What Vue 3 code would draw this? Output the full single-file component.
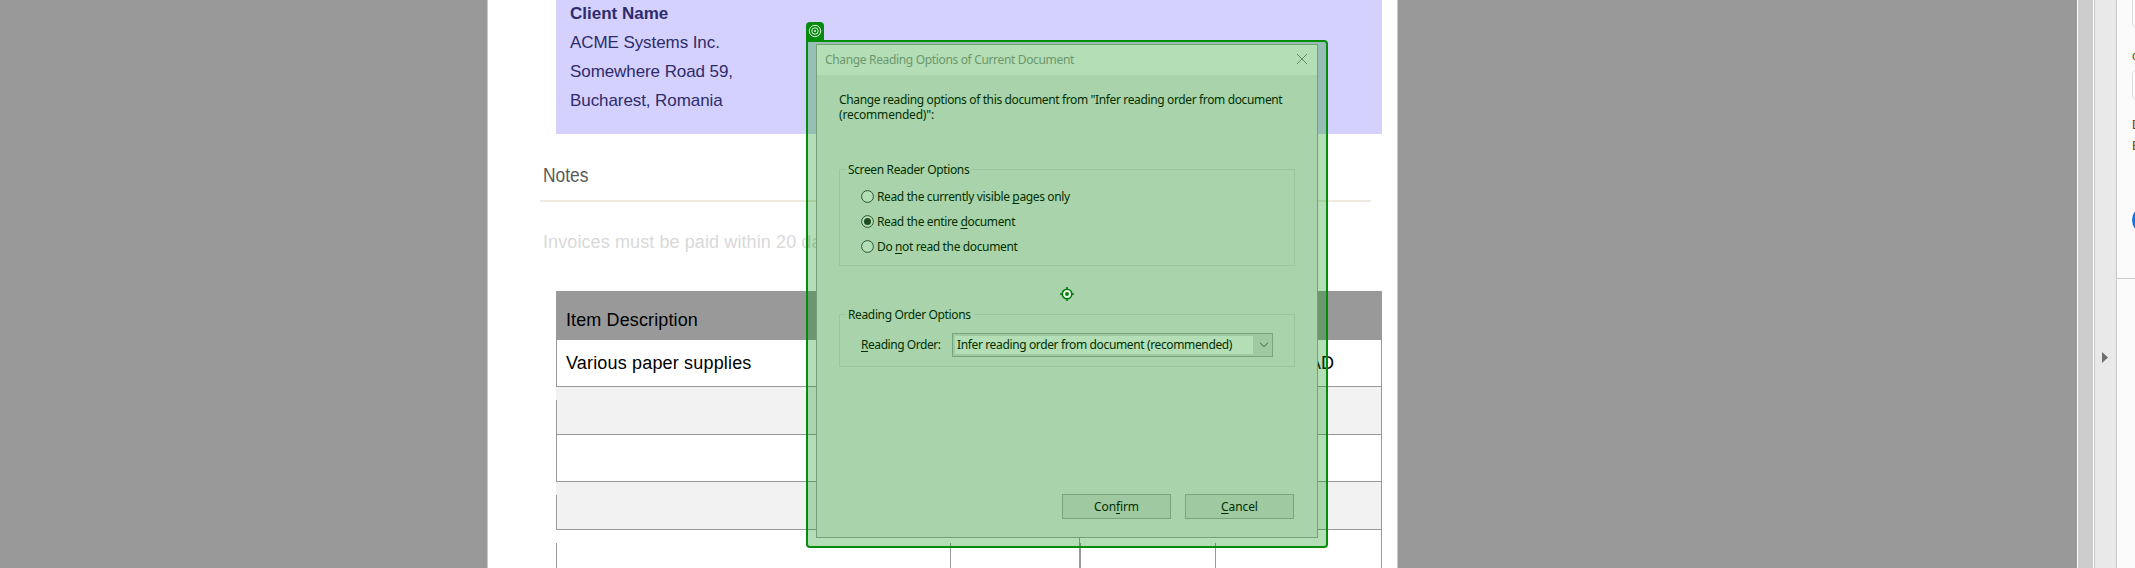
<script setup>
const rows = [
  { kind: 'first', item: 'Various paper supplies', amount: 'AD' },
  { kind: 'shade' },
  { kind: 'plain' },
  { kind: 'shade' },
  { kind: 'last' },
]
const options = [
  { before: 'Read the currently visible ', key: 'p', after: 'ages only', checked: false },
  { before: 'Read the entire ', key: 'd', after: 'ocument', checked: true },
  { before: 'Do ', key: 'n', after: 'ot read the document', checked: false },
]
</script>

<template>
  <div class="screen">
    <main class="viewer">
      <article class="page">
        <section class="client">
          <strong>Client Name</strong>
          <span>ACME Systems Inc.</span>
          <span>Somewhere Road 59,</span>
          <span>Bucharest, Romania</span>
        </section>
        <h2 class="notes"><span>Notes</span></h2>
        <p class="terms">Invoices must be paid within 20 days</p>
        <section class="table">
          <header>Item Description</header>
          <div v-for="(r, i) in rows" :key="i" class="row" :class="r.kind">
            <i class="edge"></i>
            <span v-if="r.item" class="item">{{ r.item }}</span>
            <span v-if="r.amount" class="amount">{{ r.amount }}</span>
            <template v-if="r.kind === 'last'">
              <i class="col a"></i><i class="col b"></i><i class="col c"></i><i class="col d"></i>
            </template>
          </div>
        </section>
      </article>
    </main>
    <div class="scroll"></div>
    <div class="handle">
      <svg width="6" height="11" viewBox="0 0 6 11"><path d="M0 0L6 5.5L0 11Z" fill="#6e6e6e" /></svg>
    </div>
    <aside class="tools">
      <div class="top">
        <div class="field one"></div>
        <span class="letter c">c</span>
        <div class="field two"></div>
        <span class="letter d">D</span>
        <span class="letter e">E</span>
        <div class="pill"></div>
      </div>
    </aside>

    <div class="dialog">
      <div class="titlebar">
        <span>Change Reading Options of Current Document</span>
        <svg width="12" height="12" viewBox="0 0 12 12"><path d="M1 1L11 11M11 1L1 11" stroke="#858585" fill="none" /></svg>
      </div>
      <div class="content">
        <p class="intro">Change reading options of this document from "Infer reading order from document<br /><span class="wide">(recommended)":</span></p>
        <section class="group reader">
          <h3>Screen Reader Options</h3>
          <label v-for="o in options" :key="o.key">
            <svg width="13" height="13" viewBox="0 0 13 13">
              <circle cx="6.5" cy="6.5" r="5.9" fill="#fff" stroke="#3c3c3c" />
              <circle v-if="o.checked" cx="6.5" cy="6.5" r="3.5" fill="#2c2c2c" />
            </svg>
            <span>{{ o.before }}<u>{{ o.key }}</u>{{ o.after }}</span>
          </label>
        </section>
        <section class="group order">
          <h3>Reading Order Options</h3>
          <div class="line">
            <span class="lab"><u>R</u>eading Order:</span>
            <div class="select">
              <div class="value">Infer reading order from document (recommended)</div>
              <svg width="10" height="6" viewBox="0 0 10 6"><path d="M1 .7L5 4.7L9 .7" stroke="#505050" fill="none" /></svg>
            </div>
          </div>
        </section>
        <div class="buttons">
          <button>Con<u>f</u>irm</button>
          <button><u>C</u>ancel</button>
        </div>
      </div>
    </div>

    <div class="tag">
      <svg width="14" height="14" viewBox="0 0 14 14" fill="none" stroke="#e4f5e4">
        <circle cx="7" cy="7" r="5.7" /><circle cx="7" cy="7" r="3.2" /><circle cx="7" cy="7" r="1" fill="#e4f5e4" stroke="none" />
      </svg>
    </div>
    <div class="highlight">
      <svg width="14" height="14" viewBox="0 0 14 14">
        <circle cx="7" cy="7" r="4.8" fill="#e4f5e4" stroke="#077a0c" stroke-width="1.6" />
        <circle cx="7" cy="7" r="1.9" fill="#077a0c" />
        <path d="M7 0V3M7 11V14M0 7H3M11 7H14" stroke="#077a0c" stroke-width="1.6" />
      </svg>
    </div>
  </div>
</template>

<style>
body { margin: 0; overflow: hidden; }
</style>

<style scoped>
* { box-sizing: border-box; }
.screen { position: relative; display: flex; width: 2135px; height: 568px; overflow: hidden; background: #999; font-family: "Liberation Sans", Arial, sans-serif; white-space: nowrap; }
.viewer { width: 2077px; padding-left: 487px; }
.page { width: 911px; height: 568px; background: #fff; border: solid #c9c9c9; border-width: 0 1px; overflow: hidden; }
.client { margin-left: 68px; width: 826px; height: 134px; padding-left: 14px; background: #d4d1ff; color: #2e2b6b; font-size: 17px; line-height: 29px; letter-spacing: -.08px; display: flex; flex-direction: column; }
.client strong { margin-top: -1px; letter-spacing: 0; }
.notes { margin: 0 0 0 52px; width: 831px; height: 68px; padding: 23px 0 0 3px; border-bottom: 2px solid #eeeae0; color: #595959; font-size: 20px; line-height: 36px; font-weight: 400; }
.notes span { display: inline-block; transform: scaleX(.87); transform-origin: 0 0; }
.terms { margin: 0; height: 89px; padding: 28px 0 0 55px; font-size: 18px; line-height: 24px; color: #d9d9d9; letter-spacing: .1px; }
.table { width: 826px; margin-left: 68px; font-size: 18px; color: #000; }
.table header { height: 49px; background: #999; padding: 13px 0 0 10px; line-height: 32px; letter-spacing: .12px; }
.row { position: relative; display: flex; justify-content: space-between; height: 48px; border: solid #999; border-width: 0 1px 1px 0; line-height: 22px; }
.row .edge { align-self: flex-end; width: 1px; height: 100%; background: #999; }
.row.first { height: 47px; }
.row.shade { background: #f2f2f2; }
.row.shade .edge { height: 34px; }
.row.plain { height: 47px; }
.row.last { height: 38px; border-bottom: 0; }
.row.last .edge { height: 25px; }
.item { margin: 12px auto 0 9px; letter-spacing: .17px; }
.amount { margin: 12px 47px 0 0; }
.col { position: absolute; top: 13px; bottom: 0; width: 1px; background: #999; }
.col.a { left: 394px; }
.col.b { left: 523px; top: 7px; }
.col.c { left: 524px; }
.col.d { left: 659px; }
.scroll { width: 17px; background: #ccc; border: solid #fff; border-width: 0 1px; }
.handle { width: 23px; background: #e9e9e9; border: solid #c8c8c8; border-width: 0 1px; padding: 352px 0 0 7px; line-height: 0; }
.tools { width: 18px; background: #fbfbfb; overflow: hidden; }
.top { display: flex; flex-direction: column; height: 279px; padding-left: 15px; border-bottom: 1px solid #ccc; font-size: 13px; }
.field { flex: none; width: 60px; border: 1px solid #ddd; border-radius: 4px; background: #fff; }
.field.one { height: 38px; margin-top: -10px; }
.letter { flex: none; height: 21px; line-height: 21px; color: #6b3d2e; }
.letter.c { margin-top: 17px; height: 25px; }
.field.two { height: 30px; }
.letter.d { margin-top: 14px; }
.pill { flex: none; width: 60px; height: 28px; margin-top: 50px; border-radius: 14px; background: #1473e6; }

.dialog { position: absolute; left: 816px; top: 44px; width: 502px; height: 494px; border: 1px solid #a6a6a6; background: #f0f0f0; font: 12px/15px "Noto Sans", "Open Sans", sans-serif; letter-spacing: -.365px; color: #000; }
.titlebar { display: flex; justify-content: space-between; height: 30px; padding: 7px 9px 0 8px; background: #fff; color: #999; letter-spacing: -.34px; }
.titlebar svg { margin-top: 1px; }
.content { padding: 17px 22px 0 22px; }
.intro { margin: 0; height: 77px; }
.wide { letter-spacing: -.2px; }
.group { position: relative; border: 1px solid #dcdcdc; padding-left: 21px; }
.group h3 { position: absolute; left: 6px; top: -8px; margin: 0; padding: 0 2px; height: 15px; background: #f0f0f0; font-size: 12px; font-weight: 400; }
.reader { height: 97px; padding-top: 14px; }
.reader label { display: flex; align-items: center; gap: 3px; height: 25px; }
.order { height: 53px; margin-top: 48px; padding-top: 18px; }
u { text-decoration: underline 1px; text-underline-offset: 2px; text-decoration-skip-ink: none; }
.line { display: flex; justify-content: space-between; padding-right: 21px; }
.lab { margin-top: 4px; letter-spacing: -.44px; }
.select { display: flex; width: 321px; height: 24px; border: 1px solid #adadad; background: #e1e1e1; padding: 2px; align-items: center; justify-content: space-between; }
.value { width: 298px; height: 18px; padding: 1px 0 0 2px; background: #fff; }
.select svg { margin-right: 1px; }
.buttons { display: flex; justify-content: flex-end; gap: 14px; margin: 127px 1px 0 0; }
button { width: 109px; height: 25px; padding: 0 0 1px; border: 1px solid #adadad; background: #e1e1e1; color: #000; font: inherit; letter-spacing: -.1px; }
.tag { position: absolute; left: 806px; top: 22px; width: 18px; height: 20px; padding: 2px; background: #048c0c; border-radius: 4px 4px 0 0; line-height: 0; }
.highlight { position: absolute; left: 806px; top: 40px; width: 522px; height: 508px; display: grid; place-items: center; border: 2px solid #048c0c; border-radius: 0 4px 4px 4px; background: rgba(5, 145, 10, .3); background-clip: padding-box; }
</style>
